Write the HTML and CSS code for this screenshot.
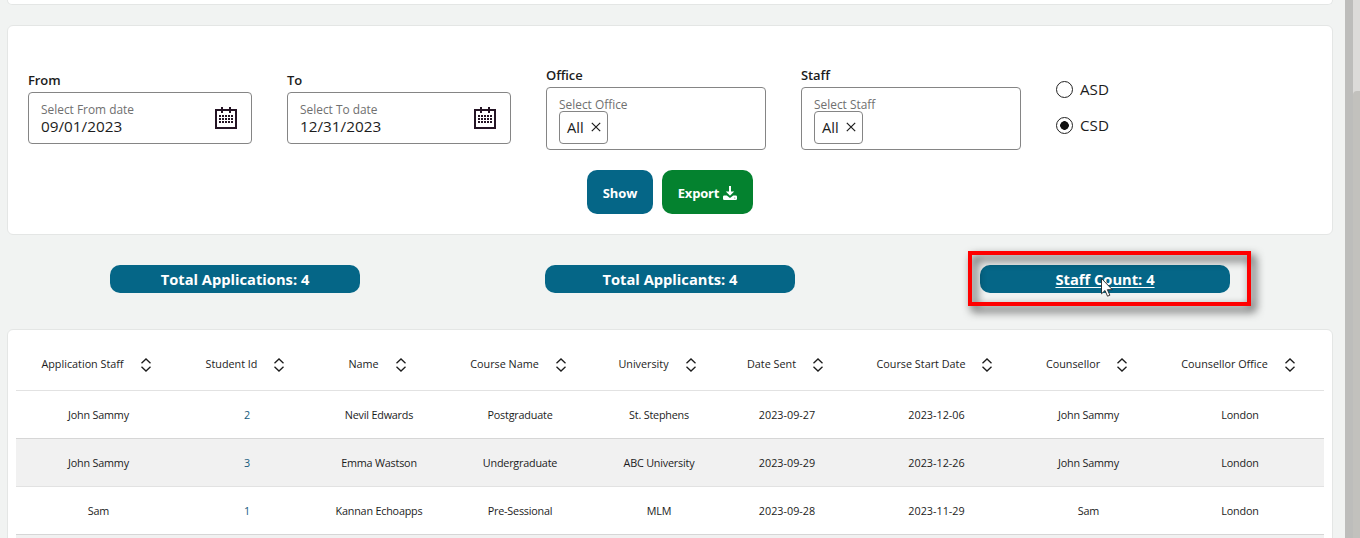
FILE: index.html
```html
<!DOCTYPE html>
<html lang="en">
<head>
<meta charset="utf-8">
<title>Applications Report</title>
<link rel="stylesheet" href="styles.css">
</head>
<body>
<svg class="sprite" aria-hidden="true">
  <symbol id="calendar" viewBox="0 0 22 22">
    <path d="M1 3h20v18H1z" fill="none" stroke="currentColor" stroke-width="2"/>
    <path d="M7 0v6M15 0v6" stroke="currentColor" stroke-width="2"/>
    <path d="M4 9h14M4 12h14M4 15h14" stroke="currentColor" stroke-width="2" stroke-dasharray="2 1"/>
  </symbol>
  <symbol id="sort" viewBox="0 0 12 14">
    <path d="M1.500 5.300 6 1l4.500 4.300M1.500 8.700 6 13l4.500-4.300" fill="none" stroke="currentColor" stroke-width="1.300"/>
  </symbol>
  <symbol id="close" viewBox="0 0 10 10">
    <path d="m.8.800 8.400 8.400M9.200.800.800 9.200" stroke="currentColor" stroke-width="1.200"/>
  </symbol>
</svg>
<div class="app">
  <main class="page">
    <section class="panel panel-top"></section>
    <section class="panel filters">
      <div class="fields">
        <div class="field date">
          <label>From</label>
          <div class="input"><div><span class="hint">Select From date</span><span class="value">09/01/2023</span></div><svg class="cal"><use href="#calendar"/></svg></div>
        </div>
        <div class="field date">
          <label>To</label>
          <div class="input"><div><span class="hint">Select To date</span><span class="value">12/31/2023</span></div><svg class="cal"><use href="#calendar"/></svg></div>
        </div>
        <div class="field multi">
          <label>Office</label>
          <div class="input"><span class="hint">Select Office</span><span class="chip">All<svg><use href="#close"/></svg></span></div>
        </div>
        <div class="field multi">
          <label>Staff</label>
          <div class="input"><span class="hint">Select Staff</span><span class="chip">All<svg><use href="#close"/></svg></span></div>
        </div>
        <div class="radios">
          <div class="radio"><i class="dot"></i>ASD</div>
          <div class="radio"><i class="dot checked"></i>CSD</div>
        </div>
      </div>
      <div class="actions">
        <div class="btn show">Show</div>
        <div class="btn export">Export<svg viewBox="0 0 14 14"><path d="M6 0h2v5.500h3.200L7 9.700 2.800 5.500H6z" fill="#fff"/><path d="M1.300 9.500h2.500L7 12l3.200-2.500h2.500q1.300 0 1.300 1.300v1.900q0 1.300-1.300 1.300H1.300Q0 14 0 12.700v-1.900q0-1.300 1.300-1.300z" fill="#fff"/><circle cx="11.800" cy="11.900" r=".5" fill="#04822f"/></svg></div>
      </div>
    </section>
    <section class="totals">
      <div class="pill">Total Applications: 4</div>
      <div class="pill">Total Applicants: 4</div>
      <div class="pill link"><span>Staff Count: 4</span></div>
    </section>
    <section class="panel results">
      <table>
        <colgroup><col class="c1"><col class="c2"><col class="c3"><col class="c4"><col class="c5"><col class="c6"><col class="c7"><col class="c8"><col class="c9"></colgroup>
        <thead><tr>
          <th>Application Staff<svg><use href="#sort"/></svg></th>
          <th>Student Id<svg><use href="#sort"/></svg></th>
          <th>Name<svg><use href="#sort"/></svg></th>
          <th>Course Name<svg><use href="#sort"/></svg></th>
          <th>University<svg><use href="#sort"/></svg></th>
          <th>Date Sent<svg><use href="#sort"/></svg></th>
          <th>Course Start Date<svg><use href="#sort"/></svg></th>
          <th>Counsellor<svg><use href="#sort"/></svg></th>
          <th>Counsellor Office<svg><use href="#sort"/></svg></th>
        </tr></thead>
        <tbody>
          <tr><td>John Sammy</td><td class="id">2</td><td>Nevil Edwards</td><td>Postgraduate</td><td>St. Stephens</td><td class="day">2023-09-27</td><td class="day">2023-12-06</td><td>John Sammy</td><td>London</td></tr>
          <tr><td>John Sammy</td><td class="id">3</td><td>Emma Wastson</td><td>Undergraduate</td><td>ABC University</td><td class="day">2023-09-29</td><td class="day">2023-12-26</td><td>John Sammy</td><td>London</td></tr>
          <tr><td>Sam</td><td class="id">1</td><td>Kannan Echoapps</td><td>Pre-Sessional</td><td>MLM</td><td class="day">2023-09-28</td><td class="day">2023-11-29</td><td>Sam</td><td>London</td></tr>
          <tr><td></td><td></td><td></td><td></td><td></td><td></td><td></td><td></td><td></td></tr>
        </tbody>
      </table>
    </section>
  </main>
  <div class="rail"></div>
  <div class="scrollbar"><div class="thumb"></div></div>
  <div class="highlight"></div>
  <svg class="cursor" viewBox="0 0 12 19"><path d="M.5.500v15.300l3.500-3.300 2.500 5.700 2.400-1-2.500-5.500h4.900z" fill="#fff" stroke="#222" stroke-width=".9"/></svg>
</div>
</body>
</html>
```
FILE: styles.css
```css
* { box-sizing: border-box; }
body {
  margin: 0;
  height: 538px;
  overflow: hidden;
  background: #f1f3f2;
  color: #1c1c1c;
  font-family: "Open Sans", "Noto Sans", sans-serif;
}
svg { display: block; flex: none; }
.sprite { position: absolute; width: 0; height: 0; }
.app { position: relative; display: flex; height: 538px; overflow: hidden; }
.page { width: 1345px; flex: none; padding: 0 12px 0 7px; }
.rail { width: 8px; background: #bdbdbb; }
.scrollbar { width: 7px; padding-top: 91px; background: #dcdbd9; }
.thumb { height: 447px; background: #c2c1bd; border-radius: 4px 0 0 0; }

.panel { background: #fff; border: 1px solid #e4e6e5; border-radius: 6px; }
.panel-top { height: 5px; border-top: 0; border-radius: 0 0 6px 6px; }
.filters { margin-top: 20px; height: 210px; padding: 40px 20px 0; }
.fields { display: flex; align-items: center; height: 84px; }
.field label { display: block; height: 21px; line-height: 19px; font-size: 13px; font-weight: 550; letter-spacing: -.1px; }
.input { border: 1px solid #858585; border-radius: 4px; padding-left: 12px; }
.date { width: 224px; margin-right: 35px; padding-bottom: 1px; }
.date label { height: 20px; line-height: 17px; }
.date .input { height: 52px; display: flex; justify-content: space-between; align-items: center; padding-right: 14px; }
.hint { display: block; font-size: 11.900px; line-height: 16px; color: #707070; white-space: nowrap; }
.value { display: block; font-size: 15.300px; line-height: 18px; }
.cal { width: 22px; height: 22px; color: #241424; }
.multi { width: 220px; margin-right: 35px; }
.multi .input { height: 63px; padding-top: 9px; }
.multi .hint { line-height: 15px; height: 14px; font-size: 11.900px; }
.chip { display: flex; align-items: center; gap: 7px; width: 49px; height: 33px; padding: 0 0 1px 7px; border: 1px solid #858585; border-radius: 4px; font-size: 14.700px; }
.chip svg { width: 10px; height: 10px; }
.radios { display: flex; flex-direction: column; gap: 18px; padding-bottom: 2px; }
.radio { display: flex; align-items: center; gap: 7px; height: 18px; font-size: 15.200px; }
.dot { width: 17px; height: 17px; border: 1.500px solid #222; border-radius: 50%; }
.checked { background: radial-gradient(circle, #111 0 4px, #fff 4.600px); }
.actions { display: flex; gap: 9px; margin: 20px 0 0 559px; }
.btn { display: flex; align-items: center; justify-content: center; height: 44px; border-radius: 10px; color: #fff; font-size: 13px; font-weight: 700; letter-spacing: -.15px; padding-top: 1px; }
.show { width: 66px; background: #056687; }
.export { width: 91px; gap: 4px; background: #04822f; }
.export svg { width: 14px; height: 14px; }

.totals { display: grid; grid-template-columns: repeat(3, 435px); justify-content: center; justify-items: center; margin: 30px 0 36px; }
.pill { width: 250px; height: 28px; line-height: 29px; border-radius: 10px; background: #056687; color: #fff; font-size: 14.700px; font-weight: 700; text-align: center; }
.link { text-decoration: underline; text-underline-offset: 2px; }

.results { height: 240px; padding: 8px 8px 0; }
table { width: 1308px; table-layout: fixed; border-collapse: separate; border-spacing: 0; font-size: 10.800px; white-space: nowrap; }
.c1 { width: 164px; } .c2 { width: 134px; } .c3 { width: 130px; }
.c4 { width: 152px; } .c5 { width: 126px; } .c6 { width: 130px; }
.c7 { width: 169px; } .c8 { width: 135px; } .c9 { width: 168px; }
th, td { padding: 0; text-align: center; font-weight: 400; border-bottom: 1px solid #e2e2e2; }
th { height: 53px; padding-right: 3px; font-weight: 500; }
th svg { display: inline-block; vertical-align: middle; width: 12px; height: 14px; margin: -2px 0 0 16px; }
td { height: 48px; letter-spacing: -.2px; }
td:first-child { padding-left: 1px; }
.day { letter-spacing: 0; }
tbody tr:nth-child(even) { background: #f1f1f1; }
tbody tr:nth-child(odd) td { border-bottom-color: #d6d6d6; }
tbody .id { color: #175b7d; }

.highlight { position: absolute; left: 968px; top: 251px; width: 283px; height: 55px; border: 4px solid #f00; filter: drop-shadow(4px 5px 5px rgba(0, 0, 0, .85)); }
.cursor { position: absolute; left: 1101px; top: 278px; width: 12px; height: 19px; }
```
